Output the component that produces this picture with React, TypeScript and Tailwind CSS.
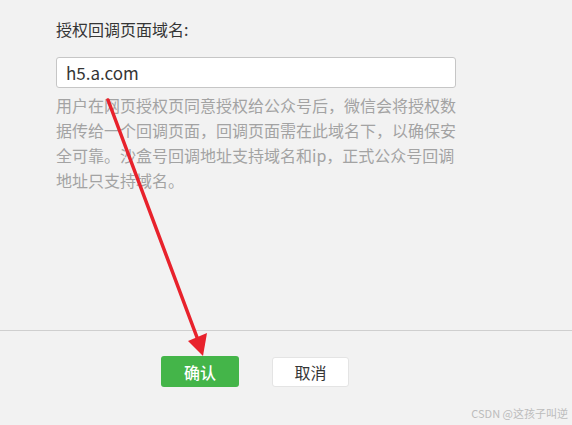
export default function App() {
  const font = { fontFamily: '"Noto Sans CJK SC", "Microsoft YaHei", sans-serif' };
  return (
    <div className="relative h-[425px] w-[572px] overflow-hidden bg-[#f2f2f2]" style={font}>
      <div className="flex h-[331px] flex-col border-b border-[#cfcfcf] px-[56px] pt-[18px]">
        <div className="text-[16px] leading-[22px] text-[#353535]">授权回调页面域名:</div>
        <div className="mt-[17px] flex h-[31px] w-[400px] items-center rounded-[3px] border border-[#c6c6c6] bg-white px-[9px] text-[17px] text-[#353535]">
          h5.a.com
        </div>
        <div className="mt-[5px] text-[16px] leading-[25px] text-[#a3a3a3]">
          <div className="whitespace-nowrap">用户在网页授权页同意授权给公众号后，微信会将授权数</div>
          <div className="whitespace-nowrap">据传给一个回调页面，回调页面需在此域名下，以确保安</div>
          <div className="whitespace-nowrap">全可靠。沙盒号回调地址支持域名和ip，正式公众号回调</div>
          <div className="whitespace-nowrap">地址只支持域名。</div>
        </div>
      </div>
      <div className="flex pl-[161px] pt-[25px]">
        <button className="flex h-[31px] w-[78px] items-center justify-center rounded-[3px] bg-[#44b549] text-[16px] font-medium text-white">
          确认
        </button>
        <button className="ml-[33px] mt-[1px] flex h-[30px] w-[77px] items-center justify-center rounded-[3px] border border-[#e4e4e4] bg-white text-[16px] text-[#353535]">
          取消
        </button>
      </div>
      <svg className="pointer-events-none absolute left-0 top-0" width="572" height="425">
        <line x1="108" y1="100" x2="198" y2="340" stroke="#e8222c" strokeWidth="3.5" strokeLinecap="round" />
        <polygon points="203,356 188,341 207,333" fill="#e8222c" />
      </svg>
      <div className="absolute bottom-[4px] right-[4px] text-[11px] leading-[16px] text-[#bcbcbc]">CSDN @这孩子叫逆</div>
    </div>
  );
}
